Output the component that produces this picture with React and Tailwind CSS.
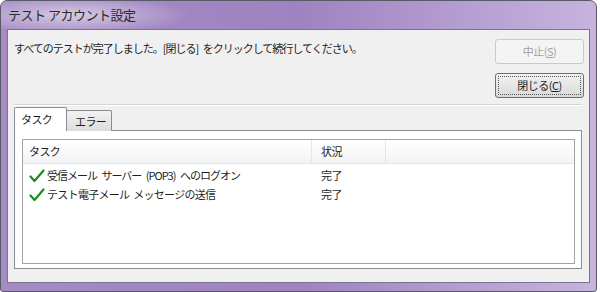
import React from "react";

const F = { fontFamily: '"Noto Sans CJK JP", "Noto Sans", sans-serif' };

function Check() {
  return (
    <svg width="16" height="14" viewBox="0 0 16 14" className="shrink-0">
      <path d="M1.5 7.5 L5.5 12 L14.5 1.5" fill="none" stroke="#1f8a1f" strokeWidth="2.2" strokeLinecap="round" strokeLinejoin="round" />
    </svg>
  );
}

export default function App() {
  return (
    <div className="w-[600px] h-[292px] bg-white" style={F}>
      <div className="w-[597px] h-[292px] rounded-t-[7px] rounded-b-[3px] border border-[#5a5a66] bg-gradient-to-r from-[#a48bc4] via-[#9e83c0] to-[#c7b3de] flex flex-col">
        <div className="h-[28px] flex items-center pl-[7px] text-[13px] tracking-[-0.5px] text-[#2a2a2a] bg-[radial-gradient(ellipse_120px_20px_at_70px_14px,rgba(255,255,255,0.55),transparent)]">
          テスト アカウント設定
        </div>
        <div className="mx-[6px] mb-[8px] flex-1 border border-[#7d7390] bg-[#f0f0f0] flex flex-col pl-[6px] pr-[5px] text-[#1e1e1e]">
          <div className="flex justify-between items-start pt-[9px]">
            <div className="text-[11px] tracking-[-1px] [word-spacing:3px] pt-[2px] leading-[14px] whitespace-pre">
              すべてのテストが完了しました。[閉じる] をクリックして続行してください。
            </div>
            <div className="flex flex-col gap-[9px]">
              <div className="w-[89px] h-[25px] rounded-[3px] border border-[#c9c9c9] bg-[#f4f4f4] flex items-center justify-center text-[11px] text-[#a3a3a3] tracking-[-0.5px]">
                中止(<span className="underline">S</span>)
              </div>
              <div className="w-[89px] h-[25px] rounded-[3px] border border-[#6f6f6f] bg-gradient-to-b from-[#f3f3f3] to-[#d9d9d9] p-[2px]">
                <div className="w-full h-full border border-dotted border-[#555] flex items-center justify-center text-[11px] tracking-[-0.5px]">
                  閉じる(<span className="underline">C</span>)
                </div>
              </div>
            </div>
          </div>
          <div className="mt-[6px] mr-[2px] h-[2px] border-t border-[#d5d5d5] border-b border-b-white"></div>
          <div className="mr-[2px] mt-[1px] flex flex-col">
            <div className="flex items-end h-[24px] relative z-10">
              <div className="w-[53px] h-[24px] bg-white border border-[#898c95] border-b-0 rounded-t-[2px] text-[11px] tracking-[-0.6px] pl-[6px] pt-[3px]">
                タスク
              </div>
              <div className="w-[46px] h-[21px] -ml-[1px] bg-gradient-to-b from-[#f2f2f2] to-[#dcdcdc] border border-[#898c95] border-b-0 rounded-t-[2px] text-[11px] tracking-[-0.6px] pl-[8px] pt-[2px]">
                エラー
              </div>
            </div>
            <div className="-mt-[1px] h-[139px] border border-[#898c95] bg-white pl-[7px] pr-[6px] pt-[8px] pb-[4px]">
              <div className="h-full border border-[#a3a3a3] bg-white flex flex-col">
                <div className="h-[24px] flex text-[11px] tracking-[-0.6px] bg-gradient-to-b from-white to-[#f2f3f5] border-b border-[#e5e5e5]">
                  <div className="w-[289px] pl-[6px] flex items-center border-r border-[#e5e5e5]">タスク</div>
                  <div className="w-[74px] pl-[9px] flex items-center border-r border-[#e5e5e5]">状況</div>
                  <div className="flex-1"></div>
                </div>
                <div className="flex flex-col text-[11px] pt-[2px]">
                  <div className="h-[19px] flex items-center">
                    <div className="w-[290px] pl-[6px] flex items-center gap-[2px]">
                      <Check />
                      <span className="tracking-[-1px] [word-spacing:3px] whitespace-pre">受信メール サーバー (POP3) へのログオン</span>
                    </div>
                    <div className="pl-[8px] tracking-[-0.6px]">完了</div>
                  </div>
                  <div className="h-[19px] flex items-center">
                    <div className="w-[290px] pl-[6px] flex items-center gap-[2px]">
                      <Check />
                      <span className="tracking-[-0.7px] [word-spacing:2px] whitespace-pre">テスト電子メール メッセージの送信</span>
                    </div>
                    <div className="pl-[8px] tracking-[-0.6px]">完了</div>
                  </div>
                </div>
              </div>
            </div>
          </div>
        </div>
      </div>
    </div>
  );
}
